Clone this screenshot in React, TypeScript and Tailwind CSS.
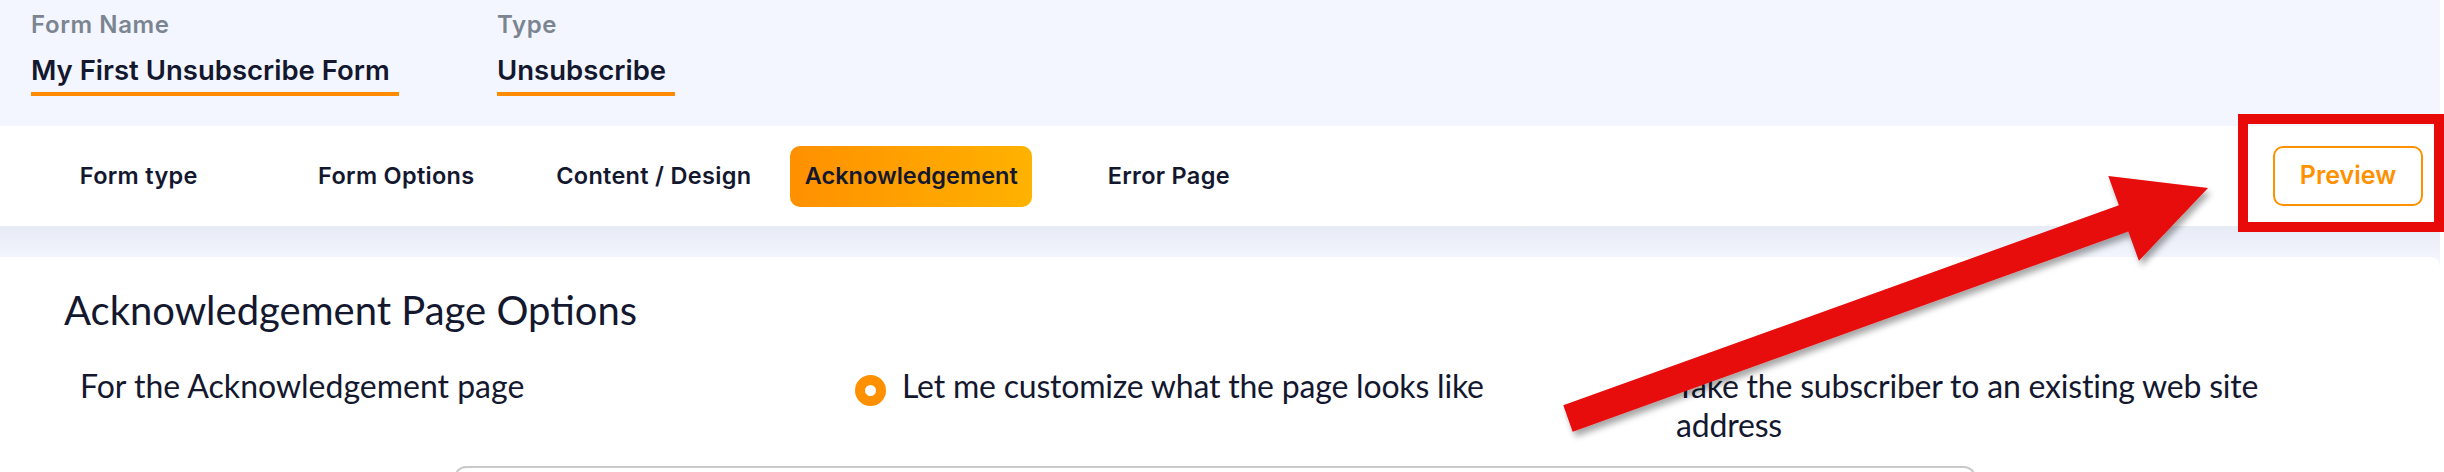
import React from "react";

const tabs = ["Form type", "Form Options", "Content / Design", "Acknowledgement", "Error Page"];

function Arrow() {
  const pts = "1563.3,405.3 2118.9,205.2 2108.3,176.1 2208,188 2138.9,260.7 2128.3,231.6 1572.7,431.7";
  return (
    <svg
      className="absolute left-0 top-0 pointer-events-none"
      width="2444"
      height="472"
      viewBox="0 0 2444 472"
    >
      <defs>
        <filter id="sh" x="-10%" y="-10%" width="130%" height="140%">
          <feDropShadow dx="3" dy="5" stdDeviation="3" floodColor="#000" floodOpacity="0.35" />
        </filter>
      </defs>
      <polygon points={pts} fill="#e80909" filter="url(#sh)" />
    </svg>
  );
}

export default function App() {
  const head = { fontFamily: "Inter, 'Noto Sans', sans-serif" };
  const body = { fontFamily: "Lato, 'Noto Sans', sans-serif" };
  return (
    <div className="relative w-[2444px] h-[472px] overflow-hidden bg-white">
      <div className="w-[2440px] bg-[#f3f6fe] flex flex-col">
        {/* header */}
        <div className="h-[126px] shrink-0 flex pl-[31px] pt-[13px]" style={head}>
          <div className="flex flex-col w-[466px]">
            <div className="text-[24px] leading-[24px] font-semibold tracking-[0.6px] text-[#7b8591]">Form Name</div>
            <div className="mt-[19px] self-start text-[27.5px] leading-[28px] font-semibold text-[#14182f] pb-[8px] pr-[9px] border-b-[4px] border-[#ff8c00]">
              My First Unsubscribe Form
            </div>
          </div>
          <div className="flex flex-col">
            <div className="text-[24px] leading-[24px] font-semibold tracking-[0.6px] text-[#7b8591]">Type</div>
            <div className="mt-[19px] self-start text-[27.5px] leading-[28px] font-semibold text-[#14182f] pb-[8px] pr-[9px] border-b-[4px] border-[#ff8c00]">
              Unsubscribe
            </div>
          </div>
        </div>

        {/* tab bar */}
        <div className="h-[100px] shrink-0 bg-white flex items-center pl-[10px] pr-[17px]" style={head}>
          {tabs.map((t) => (
            <div key={t} className="w-[257.5px] flex justify-center">
              {t === "Acknowledgement" ? (
                <div className="w-[242px] h-[61px] rounded-[10px] bg-gradient-to-r from-[#ff9000] to-[#ffb200] flex items-center justify-center text-[23.5px] font-semibold text-[#14182f]">
                  {t}
                </div>
              ) : (
                <div className="h-[61px] flex items-center text-[23.5px] font-semibold text-[#14182f] tracking-[0.3px]">{t}</div>
              )}
            </div>
          ))}
          <div className="ml-auto w-[150px] h-[60px] rounded-[10px] border-2 border-[#ff9100] flex items-center justify-center text-[25px] font-semibold text-[#ff9100]">
            Preview
          </div>
        </div>

        {/* strip */}
        <div className="h-[31px] shrink-0 bg-gradient-to-b from-[#e7ebf5] to-[#f2f5fd]" />

        {/* content */}
        <div className="shrink-0 h-[215px] bg-white rounded-tr-[10px] pt-[34px]" style={body}>
          <div className="pl-[64px] text-[40px] leading-[38px] text-[#14182f]">Acknowledgement Page Options</div>
          <div className="mt-[37px] flex pl-[80px] text-[32px] leading-[39px] text-[#14182f]">
            <div className="w-[775px] shrink-0">For the Acknowledgement page</div>
            <div className="w-[774px] shrink-0 flex items-start">
              <div className="mt-[9px] w-[31px] h-[31px] rounded-full border-[10px] border-[#ff9100] bg-white shrink-0" />
              <div className="ml-[16px] w-[620px] tracking-[-0.2px]">Let me customize what the page looks like</div>
            </div>
            <div className="shrink-0 flex items-start">
              <div className="mt-[9px] w-[31px] h-[31px] rounded-full bg-white shrink-0" />
              <div className="ml-[16px] w-[620px] tracking-[-0.2px]">Take the subscriber to an existing web site address</div>
            </div>
          </div>
          <div className="mt-[22px] ml-[454px] w-[1522px] h-[40px] rounded-t-[12px] border-2 border-b-0 border-[#c9c9c9]" />
        </div>
      </div>

      <Arrow />
      <div className="absolute left-[2238px] top-[114px] w-[206px] h-[118px] border-[10px] border-[#e80909]" />
    </div>
  );
}
